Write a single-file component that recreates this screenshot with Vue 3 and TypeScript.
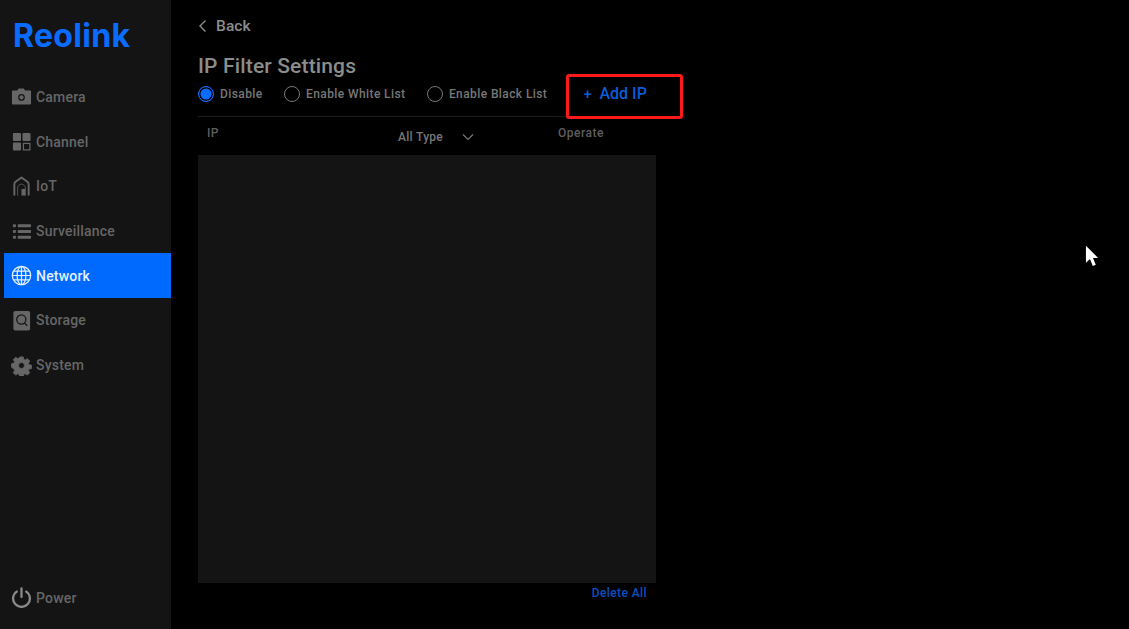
<script setup lang="ts">
const navItems = [
  { label: 'Camera', icon: 'camera' },
  { label: 'Channel', icon: 'channel' },
  { label: 'IoT', icon: 'iot' },
  { label: 'Surveillance', icon: 'list' },
  { label: 'Network', icon: 'globe', active: true },
  { label: 'Storage', icon: 'storage' },
  { label: 'System', icon: 'gear' },
]
const radios = [
  { label: 'Disable', on: true },
  { label: 'Enable White List', on: false },
  { label: 'Enable Black List', on: false },
]
</script>

<template>
  <div class="page">
    <aside class="sidebar">
      <div class="logo">Reolink</div>
      <nav class="nav">
        <div v-for="item in navItems" :key="item.label" class="nav-item" :class="{ active: item.active }">
          <svg class="nav-icon" viewBox="0 0 22 22">
            <g v-if="item.icon === 'camera'">
              <path fill="currentColor" fill-rule="evenodd" d="M1 5.500C1 5 1.400 4.600 2 4.600h4.600L8 2.600h5.400l1.400 2H20c.6 0 1 .4 1 .9v13.100c0 .5-.4.9-1 .9H2c-.6 0-1-.4-1-.9V5.500ZM11 8.500a3.500 3.500 0 1 0 0 7 3.500 3.500 0 0 0 0-7Z" />
              <circle cx="11" cy="12" r="2.200" fill="currentColor" />
            </g>
            <g v-else-if="item.icon === 'channel'" fill="currentColor">
              <rect x="2" y="2" width="8.500" height="8.500" rx="1.200" />
              <rect x="12" y="2" width="8.500" height="8.500" rx="1.200" />
              <rect x="2" y="12" width="8.500" height="8.500" rx="1.200" />
              <rect x="13" y="13" width="6.800" height="6.800" fill="none" stroke="currentColor" stroke-width="1.300" />
            </g>
            <g v-else-if="item.icon === 'iot'">
              <path d="M3.500 20.500V8.500C3.500 7.500 4 6.800 4.800 6.100L11 1.500l6.200 4.600c.8.7 1.300 1.400 1.300 2.400v12" fill="none" stroke="currentColor" stroke-width="2" stroke-linejoin="round" />
              <path d="M7 20.500V12.500c0-2.200 1.800-4 4-4s4 1.800 4 4v8" fill="none" stroke="currentColor" stroke-width=".8" />
              <path d="M11 13.500h4v7h-4Z" fill="currentColor" />
            </g>
            <g v-else-if="item.icon === 'list'" fill="currentColor">
              <rect x="2" y="3.500" width="3.200" height="3" rx="1" />
              <rect x="7" y="3.500" width="14" height="3" rx=".8" />
              <rect x="2" y="9.500" width="3.200" height="3" rx="1" />
              <rect x="7" y="9.500" width="14" height="3" rx=".8" />
              <rect x="2" y="15.500" width="3.200" height="3" rx="1" />
              <rect x="7" y="15.500" width="14" height="3" rx=".8" />
            </g>
            <g v-else-if="item.icon === 'globe'" fill="none" stroke="currentColor" stroke-width="1.300">
              <circle cx="11" cy="11" r="9.600" />
              <ellipse cx="11" cy="11" rx="4.600" ry="9.600" />
              <path d="M11 1.400v19.200M1.400 11h19.200M2.700 6.300h16.600M2.700 15.700h16.600" />
            </g>
            <g v-else-if="item.icon === 'storage'">
              <rect x="2.500" y="1" width="17.500" height="20.500" rx="2" fill="currentColor" />
              <circle cx="10.800" cy="10" r="4.800" fill="none" stroke="#141414" stroke-width="1.300" />
              <path d="M14 13.500l3 3" stroke="#141414" stroke-width="1.300" />
            </g>
            <g v-else-if="item.icon === 'gear'">
              <path fill="currentColor" stroke="currentColor" stroke-width="1" stroke-linejoin="round" fill-rule="evenodd" transform="translate(1.100 1.100) scale(.9)" d="M9 1h4l.6 2.900 1.700.7 2.500-1.600 2.800 2.800-1.600 2.500.7 1.700 2.900.6v4l-2.900.6-.7 1.700 1.600 2.500-2.800 2.800-2.500-1.600-1.700.7-.6 2.900H9l-.6-2.900-1.700-.7-2.500 1.600-2.800-2.800 1.600-2.500-.7-1.700L-.6 13V9l2.900-.6.700-1.700L1.400 4.200l2.800-2.800 2.500 1.600 1.700-.7L9 1ZM11 7.500a3.500 3.500 0 1 0 0 7 3.500 3.500 0 0 0 0-7Z" />
            </g>
          </svg>
          <span>{{ item.label }}</span>
        </div>
      </nav>
      <div class="nav-item power">
        <svg class="nav-icon power-icon" viewBox="0 0 22 22" fill="none" stroke="currentColor" stroke-width="2.400" stroke-linecap="round">
          <path d="M11 1.500v9" />
          <path d="M6 4.800a8.800 8.800 0 1 0 10 0" />
        </svg>
        <span>Power</span>
      </div>
    </aside>

    <main class="main">
      <div class="back">
        <svg class="chev-left" viewBox="0 0 10 14" fill="none" stroke="currentColor" stroke-width="1.400">
          <path d="M7.500 1.500 2 7l5.500 5.500" />
        </svg>
        <span>Back</span>
      </div>
      <h1 class="title">IP Filter Settings</h1>

      <div class="options">
        <label v-for="r in radios" :key="r.label" class="radio">
          <span class="radio-dot" :class="{ on: r.on }"></span>
          <span>{{ r.label }}</span>
        </label>
        <button class="add-ip"><span class="plus">+</span>Add IP</button>
      </div>

      <div class="table">
        <div class="thead">
          <span class="col-ip">IP</span>
          <span class="col-type">
            All Type
            <svg class="chev-down" viewBox="0 0 12 8" fill="none" stroke="currentColor" stroke-width="1.200">
              <path d="M1 1.500 6 6.500l5-5" />
            </svg>
          </span>
          <span class="col-op">Operate</span>
        </div>
        <div class="tbody"></div>
        <div class="tfoot">Delete All</div>
      </div>
    </main>

    <div class="highlight"></div>
    <svg class="cursor" viewBox="0 0 16 24">
      <path fill="#fff" d="M1 0v18l4.300-4 3 7.500 3.200-1.300-3-7.200H14Z" />
    </svg>
  </div>
</template>

<style>
html, body { margin: 0; background: #000; }
</style>

<style scoped>
.page {
  width: 1129px;
  height: 629px;
  display: flex;
  background: #000;
  font-family: Roboto, "Liberation Sans", sans-serif;
  overflow: hidden;
  position: relative;
}
.sidebar {
  width: 171px;
  flex: none;
  background: #141414;
  display: flex;
  flex-direction: column;
  box-sizing: border-box;
  padding: 0 0 9px 4px;
}
.logo {
  height: 74.600px;
  padding-left: 9px;
  padding-top: 17px;
  box-sizing: border-box;
  color: #0a6cff;
  font-family: Inter, Roboto, sans-serif;
  font-size: 32px;
  line-height: 38px;
  font-weight: 700;
  letter-spacing: 0.3px;
}
.nav {
  flex: 1;
  display: flex;
  flex-direction: column;
}
.nav-item {
  height: 44.700px;
  flex: none;
  display: flex;
  align-items: center;
  gap: 4px;
  padding-left: 7px;
  color: #666;
  font-size: 14px;
  font-weight: 500;
  letter-spacing: 0.2px;
}
.nav-item.active {
  background: #006aff;
  color: #e6f0ff;
}
.nav-icon {
  width: 21px;
  height: 21px;
  flex: none;
}
.power-icon {
  color: #8a8a8a;
}
.main {
  flex: 1;
  padding-left: 27px;
  display: flex;
  flex-direction: column;
  align-items: flex-start;
}
.back {
  height: 22px;
  margin-top: 15px;
  display: flex;
  align-items: center;
  gap: 8px;
  color: #8c8c8c;
  font-size: 15.500px;
  font-weight: 500;
  letter-spacing: 0.1px;
}
.chev-left {
  width: 10px;
  height: 14px;
}
.title {
  margin: 16px 0 0;
  color: #8c8c8c;
  font-size: 21px;
  line-height: 26px;
  font-weight: 500;
  letter-spacing: 0.15px;
}
.options {
  display: flex;
  align-items: center;
  height: 30px;
  margin-bottom: 7px;
}
.radio {
  display: flex;
  align-items: center;
  gap: 6px;
  color: #777;
  font-size: 12px;
  font-weight: 500;
  letter-spacing: 0.4px;
  margin-right: 21.500px;
}
.radio-dot {
  width: 16px;
  height: 16px;
  box-sizing: border-box;
  border: 1.500px solid #777;
  border-radius: 50%;
  flex: none;
}
.radio-dot.on {
  border-color: #0a6cff;
  background: #0a6cff;
  box-shadow: inset 0 0 0 1.500px #000;
}
.add-ip {
  margin-left: 15px;
  margin-top: -1px;
  padding: 0;
  border: 0;
  background: none;
  color: #0a5cdc;
  font-family: inherit;
  font-size: 16px;
  font-weight: 500;
  display: flex;
  align-items: center;
}
.plus {
  margin-right: 8px;
  font-size: 14px;
}
.table {
  width: 458px;
  display: flex;
  flex-direction: column;
}
.thead {
  height: 38px;
  border-top: 1px solid #1c1c1c;
  display: grid;
  grid-template-columns: 200px 160px 1fr;
  color: #5e5e5e;
  font-size: 12px;
  font-weight: 500;
  letter-spacing: 0.3px;
}
.col-ip {
  padding: 9px 0 0 9px;
}
.col-type {
  display: flex;
  align-items: flex-start;
  gap: 19px;
  padding-top: 13px;
  color: #777;
}
.chev-down {
  width: 12px;
  height: 8px;
  margin-top: 3px;
}
.col-op {
  padding-top: 9px;
  letter-spacing: 0.5px;
}
.tbody {
  height: 428px;
  background: #141414;
}
.tfoot {
  text-align: right;
  padding: 3px 9px 0 0;
  color: #0a50c0;
  font-size: 12px;
  line-height: 15px;
  font-weight: 500;
  letter-spacing: 0.4px;
}
.highlight {
  position: absolute;
  left: 566px;
  top: 74px;
  width: 117px;
  height: 45px;
  box-sizing: border-box;
  border: 3px solid #ff1a1a;
  border-radius: 3px;
}
.cursor {
  position: absolute;
  left: 1085px;
  top: 245px;
  width: 15px;
  height: 24px;
}
</style>
